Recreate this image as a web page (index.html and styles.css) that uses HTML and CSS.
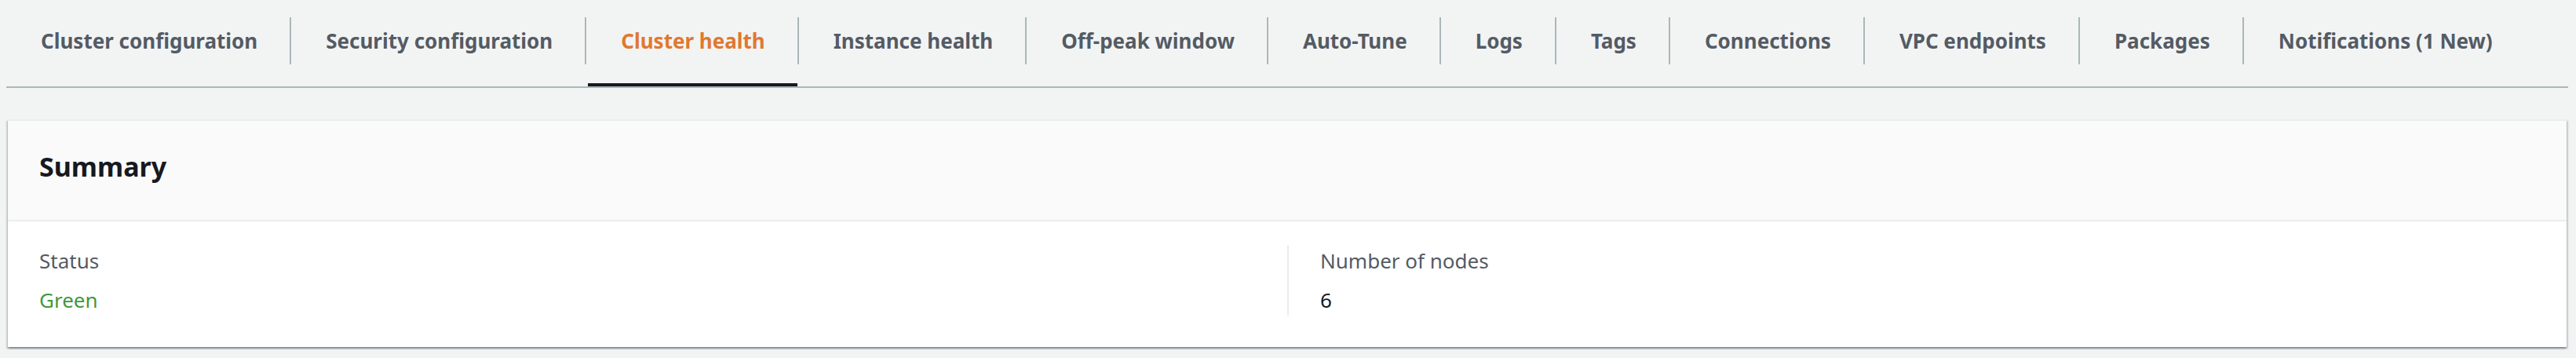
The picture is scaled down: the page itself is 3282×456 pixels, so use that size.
FILE: index.html
```html
<!DOCTYPE html>
<html lang="en">
<head>
<meta charset="utf-8">
<title>Cluster health</title>
<link rel="stylesheet" href="styles.css">
</head>
<body>
<div class="tabs" role="tablist" aria-label="Domain details">
  <button class="tab" role="tab" type="button">Cluster configuration</button>
  <button class="tab" role="tab" type="button">Security configuration</button>
  <button class="tab tab-active" role="tab" type="button" aria-selected="true">Cluster health</button>
  <button class="tab" role="tab" type="button">Instance health</button>
  <button class="tab" role="tab" type="button">Off-peak window</button>
  <button class="tab" role="tab" type="button">Auto-Tune</button>
  <button class="tab" role="tab" type="button">Logs</button>
  <button class="tab" role="tab" type="button">Tags</button>
  <button class="tab" role="tab" type="button">Connections</button>
  <button class="tab" role="tab" type="button">VPC endpoints</button>
  <button class="tab" role="tab" type="button">Packages</button>
  <button class="tab" role="tab" type="button">Notifications (1 New)</button>
</div>
<section class="card">
  <header class="card-header">
    <h2 class="card-title">Summary</h2>
  </header>
  <dl class="fields">
    <div class="field">
      <dt class="label">Status</dt>
      <dd class="value value-ok">Green</dd>
    </div>
    <div class="field">
      <dt class="label">Number of nodes</dt>
      <dd class="value">6</dd>
    </div>
  </dl>
</section>
</body>
</html>
```
FILE: styles.css
```css
* {
  box-sizing: border-box;
}

body {
  margin: 0;
  padding: 22px 10px 14px 8px;
  background: #f2f4f4;
  color: #16191f;
  font-family: "Noto Sans", "Open Sans", sans-serif;
  font-size: 26px;
  line-height: 40px;
}

.tabs {
  display: flex;
  border-bottom: 2px solid #aab7b8;
}

.tab {
  position: relative;
  margin: 0;
  padding: 0 43px 28px 44px;
  border: 0;
  background: none;
  color: #545b64;
  font: inherit;
  font-weight: 700;
  line-height: 60px;
  white-space: nowrap;
  cursor: pointer;
}

.tab:not(:last-child)::after {
  content: "";
  position: absolute;
  top: 0;
  right: 0;
  width: 2px;
  height: 60px;
  background: #aab7b8;
}

.tab-active {
  color: #e07830;
}

.tab-active::before {
  content: "";
  position: absolute;
  right: 2px;
  bottom: 0;
  left: 2px;
  height: 4px;
  background: #16191f;
}

.card {
  margin: 40px 2px 0;
  border-top: 2px solid #eaeded;
  background: #fff;
  box-shadow: 0 2px 2px 0 rgba(0, 28, 36, 0.3), 2px 2px 2px 0 rgba(0, 28, 36, 0.15), -2px 2px 2px 0 rgba(0, 28, 36, 0.15);
}

.card-header {
  padding: 34px 40px 44px;
  border-bottom: 2px solid #eaeded;
  background: #fafafa;
}

.card-title {
  margin: 0;
  font-size: 34px;
  font-weight: 700;
  line-height: 48px;
}

.fields {
  display: grid;
  grid-template-columns: 1fr 1fr;
  margin: 0;
  padding: 30px 0 40px;
}

.field {
  display: grid;
  gap: 10px;
  padding: 0 40px;
}

.field + .field {
  border-left: 2px solid #eaeded;
}

.label {
  color: #545b64;
}

.value {
  margin: 0;
}

.value-ok {
  color: #3f9940;
}
```
